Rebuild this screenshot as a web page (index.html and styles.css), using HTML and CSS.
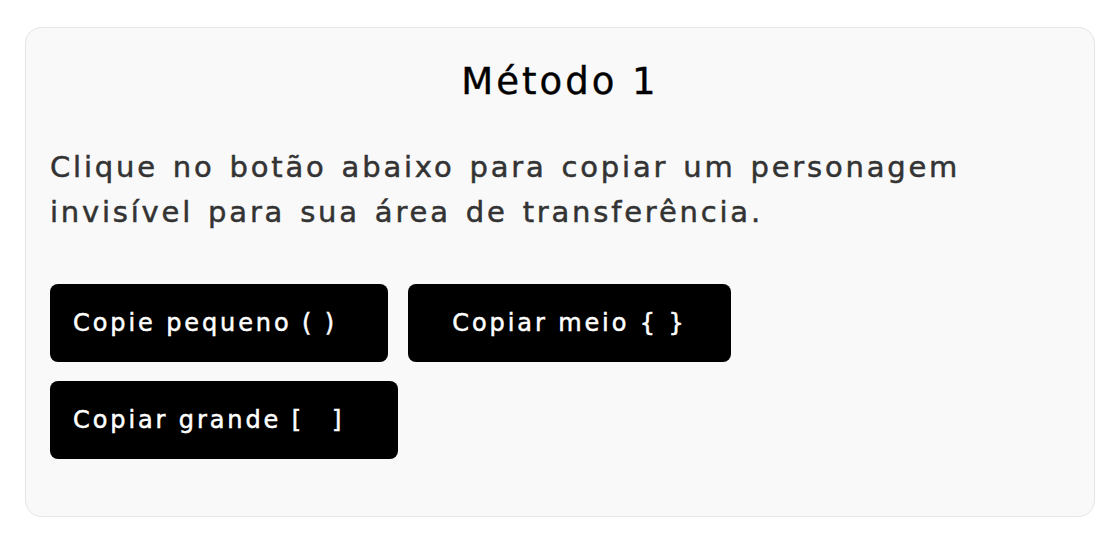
FILE: index.html
```html
<!DOCTYPE html>
<html lang="pt">

<head>
    <meta charset="UTF-8">
    <meta name="viewport" content="width=device-width, initial-scale=1.0">
    <title>Método 1 - Personagem invisível</title>
    <link rel="stylesheet" href="styles.css">
</head>

<body>
    <div class="method-card">
        <h2 class="method-title">Método 1</h2>
        <p class="method-text">Clique no botão abaixo para copiar um personagem invisível para sua área de transferência.</p>

        <div class="copy-buttons">
            <button class="copy-btn small">Copie pequeno ( )</button>
            <button class="copy-btn medium">Copiar meio { }</button>
            <button class="copy-btn large">Copiar grande [<span class="blank"></span>]</button>
        </div>
    </div>
</body>

</html>
```

FILE: styles.css
```css
* {
    box-sizing: border-box;
    margin: 0;
    padding: 0;
}

body {
    background-color: #ffffff;
    font-family: 'DejaVu Sans', 'Liberation Sans', sans-serif;
}

.method-card {
    background-color: #f9f9f9;
    border: 1px solid #e6e6e6;
    border-radius: 16px;
    width: 1070px;
    height: 490px;
    margin: 27px 0 0 25px;
    padding: 30px 24px 0 24px;
}

.method-title {
    text-align: center;
    font-size: 37px;
    font-weight: normal;
    letter-spacing: 3px;
    color: #000;
    line-height: 48px;
    -webkit-text-stroke: 0.4px #000;
}

.method-text {
    margin-top: 39px;
    font-size: 29px;
    letter-spacing: 2.8px;
    word-spacing: 3px;
    color: #333;
    line-height: 45px;
    -webkit-text-stroke: 0.5px #333;
}

.copy-buttons {
    margin-top: 49px;
    display: flex;
    flex-wrap: wrap;
    gap: 19px 20px;
    width: 700px;
}

.copy-btn {
    background-color: #000;
    color: #fff;
    border: none;
    border-radius: 8px;
    height: 78px;
    padding: 0 23px;
    font-family: inherit;
    font-size: 24px;
    letter-spacing: 2.9px;
    cursor: pointer;
    text-align: left;
    white-space: nowrap;
    -webkit-text-stroke: 0.5px #fff;
}

.copy-btn.small {
    width: 338px;
}

.copy-btn.medium {
    width: 323px;
    text-align: center;
}

.copy-btn.large {
    width: 348px;
}

.blank {
    display: inline-block;
    width: 28px;
}
```
